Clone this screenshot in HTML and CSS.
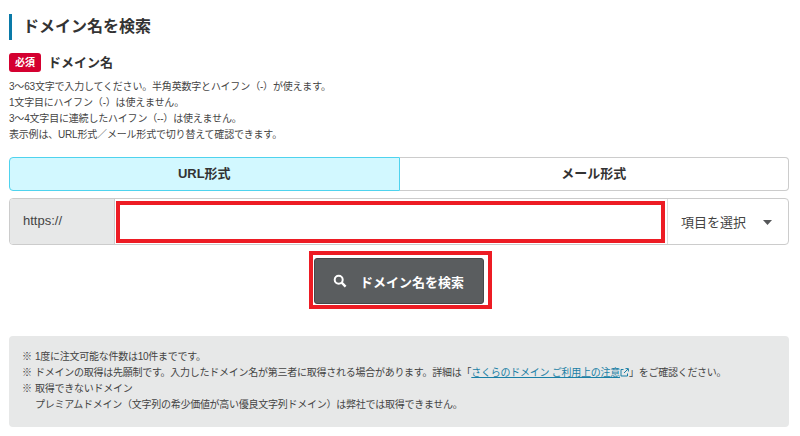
FILE: index.html
```html
<!DOCTYPE html>
<html lang="ja">
<head>
<meta charset="utf-8">
<title>ドメイン名を検索</title>
<link rel="stylesheet" href="styles.css">
</head>
<body>
<main class="page">
  <h1 class="title">ドメイン名を検索</h1>
  <div class="label-row">
    <span class="badge">必須</span>
    <h2 class="label">ドメイン名</h2>
  </div>
  <div class="help">
    <p>3〜63文字で入力してください。半角英数字とハイフン（-）が使えます。</p>
    <p>1文字目にハイフン（-）は使えません。</p>
    <p>3〜4文字目に連続したハイフン（--）は使えません。</p>
    <p>表示例は、URL形式／メール形式で切り替えて確認できます。</p>
  </div>
  <div class="tabs">
    <div class="tab tab-on">URL形式</div>
    <div class="tab tab-off">メール形式</div>
  </div>
  <div class="field">
    <div class="scheme">https://</div>
    <div class="input-mark"><input class="input" type="text" aria-label="ドメイン名"></div>
    <div class="select">
      <span>項目を選択</span>
      <svg class="caret" width="9" height="5" viewBox="0 0 9 5"><path d="M0 0h9L4.5 5z" fill="#555759"/></svg>
    </div>
  </div>
  <div class="action">
    <div class="button-mark">
      <button class="button" type="button">
        <svg class="search" width="14" height="14" viewBox="0 0 14 14" fill="none" stroke="#fff"><circle cx="5.7" cy="5.7" r="4" stroke-width="2"/><path d="M8.7 8.7L12.6 12.6" stroke-width="2.4"/></svg>
        <span>ドメイン名を検索</span>
      </button>
    </div>
  </div>
  <div class="notes">
    <p class="note"><span class="mark">※</span><span>1度に注文可能な件数は10件までです。</span></p>
    <p class="note"><span class="mark">※</span><span>ドメインの取得は先願制です。入力したドメイン名が第三者に取得される場合があります。詳細は「<a class="link" href="#">さくらのドメイン ご利用上の注意</a><svg class="ext" width="9" height="9" viewBox="0 0 9 9" fill="none" stroke="#1a7fa5"><path d="M3.5 1.5H1v6.5h6.5V5.5"/><path d="M4 5L8 1M5.5 .6H8.4V3.5"/></svg>」をご確認ください。</span></p>
    <p class="note"><span class="mark">※</span><span>取得できないドメイン<br>プレミアムドメイン（文字列の希少価値が高い優良文字列ドメイン）は弊社では取得できません。</span></p>
  </div>
</main>
</body>
</html>
```
FILE: styles.css
```css
* { box-sizing: border-box; }
html, body { margin: 0; padding: 0; background: #fff; }
body {
  width: 800px;
  height: 436px;
  overflow: hidden;
  font-family: "Liberation Sans", "Noto Sans CJK JP", sans-serif;
  color: #333;
}
p, h1, h2 { margin: 0; }
.page { padding: 14px 11px 0 9px; }
.title {
  height: 26px;
  border-left: 3px solid #0a7aa8;
  padding-left: 11px;
  font-size: 16px;
  font-weight: 700;
  line-height: 26px;
}
.label-row { display: flex; align-items: center; gap: 7px; margin-top: 13px; height: 19px; }
.badge {
  width: 32px;
  height: 19px;
  border-radius: 3px;
  background: #d40030;
  color: #fff;
  font-size: 10px;
  font-weight: 700;
  line-height: 19px;
  text-align: center;
}
.label { font-size: 13px; font-weight: 700; line-height: 19px; }
.help { margin-top: 7px; font-size: 10px; letter-spacing: -0.19px; line-height: 16px; color: #444; }
.help p:first-child { margin-top: 1px; }
.tabs { display: flex; margin-top: 14px; height: 34px; }
.tab {
  flex: 1;
  font-size: 13px;
  font-weight: 700;
  line-height: 32px;
  text-align: center;
  border: 1px solid #ccc;
}
.tab-on { background: #d2f8ff; border-color: #4fd3ee; border-radius: 4px 0 0 4px; }
.tab-off { border-left: 0; border-radius: 0 4px 4px 0; }
.field {
  display: flex;
  align-items: stretch;
  height: 47px;
  margin-top: 7px;
  border: 1px solid #ccc;
  border-radius: 4px;
}
.scheme {
  width: 105px;
  background: #e7e8e8;
  border-right: 1px solid #ccc;
  border-radius: 3px 0 0 3px;
  padding-left: 13px;
  font-size: 13px;
  line-height: 43px;
  color: #444;
}
.input-mark { flex: 1; padding: 2px 2px 1px 1px; }
.input {
  display: block;
  width: 100%;
  height: 42px;
  border: 4px solid #ed1c24;
  background: #fff;
  padding: 0;
  outline: 0;
}
.select {
  display: flex;
  align-items: center;
  justify-content: space-between;
  width: 121px;
  border-left: 1px solid #ddd;
  padding: 0 16px 0 13px;
  font-size: 13px;
  color: #444;
}
.caret { margin-top: 2px; }
.action { display: flex; justify-content: center; margin-top: 6px; padding-left: 2px; }
.button-mark {
  width: 183px;
  height: 58px;
  border: 4px solid #ed1c24;
  background: #fff;
  padding: 3px 4px 0 1px;
}
.button {
  display: flex;
  align-items: center;
  justify-content: center;
  gap: 13px;
  width: 170px;
  height: 46px;
  border: 1px solid #45484a;
  border-radius: 3px;
  background: #5a5d5f;
  color: #fff;
  font-family: inherit;
  font-size: 13px;
  font-weight: 700;
  padding: 0;
}
.notes {
  height: 91px;
  margin-top: 27px;
  padding: 13px 13px 0;
  border-radius: 4px;
  background: #e7e8e8;
  font-size: 10px;
  letter-spacing: -0.26px;
  line-height: 16px;
  color: #444;
}
.note { display: flex; gap: 3px; }
.mark { width: 10px; flex: none; }
.link { color: #1a7fa5; text-decoration: underline; }
.ext { vertical-align: -0.5px; }
```
